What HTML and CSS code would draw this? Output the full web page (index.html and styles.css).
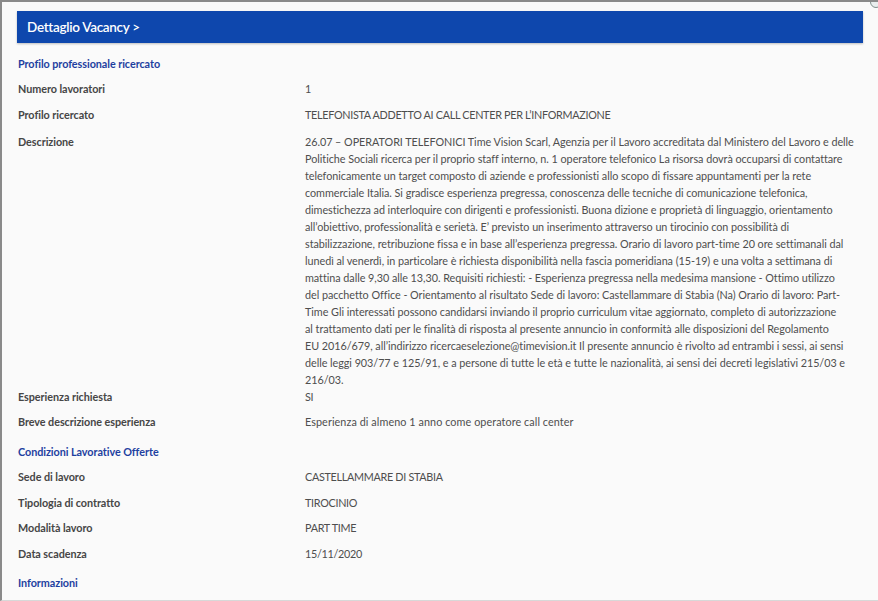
FILE: index.html
```html
<!DOCTYPE html>
<html lang="it">
<head>
<meta charset="utf-8">
<title>Dettaglio Vacancy</title>
<link rel="stylesheet" href="styles.css">
</head>
<body>
<div class="modal">
  <span class="corner"></span>
  <div class="header">Dettaglio Vacancy &gt;</div>
  <div class="content">
    <div class="section section-first">Profilo professionale ricercato</div>
    <div class="row"><div class="label">Numero lavoratori</div><div class="value">1</div></div>
    <div class="row"><div class="label">Profilo ricercato</div><div class="value">TELEFONISTA ADDETTO AI CALL CENTER PER L’INFORMAZIONE</div></div>
    <div class="row row-long"><div class="label">Descrizione</div><div class="value text desc">26.07 – OPERATORI TELEFONICI Time Vision Scarl, Agenzia per il Lavoro accreditata dal Ministero del Lavoro e delle<br>Politiche Sociali ricerca per il proprio staff interno, n. 1 operatore telefonico La risorsa dovrà occuparsi di contattare<br>telefonicamente un target composto di aziende e professionisti allo scopo di fissare appuntamenti per la rete<br>commerciale Italia. Si gradisce esperienza pregressa, conoscenza delle tecniche di comunicazione telefonica,<br>dimestichezza ad interloquire con dirigenti e professionisti. Buona dizione e proprietà di linguaggio, orientamento<br>all’obiettivo, professionalità e serietà. E’ previsto un inserimento attraverso un tirocinio con possibilità di<br>stabilizzazione, retribuzione fissa e in base all’esperienza pregressa. Orario di lavoro part-time 20 ore settimanali dal<br>lunedì al venerdì, in particolare è richiesta disponibilità nella fascia pomeridiana (15-19) e una volta a settimana di<br>mattina dalle 9,30 alle 13,30. Requisiti richiesti: - Esperienza pregressa nella medesima mansione - Ottimo utilizzo<br>del pacchetto Office - Orientamento al risultato Sede di lavoro: Castellammare di Stabia (Na) Orario di lavoro: Part-<br>Time Gli interessati possono candidarsi inviando il proprio curriculum vitae aggiornato, completo di autorizzazione<br>al trattamento dati per le finalità di risposta al presente annuncio in conformità alle disposizioni del Regolamento<br>EU 2016/679, all’indirizzo ricercaeselezione@timevision.it Il presente annuncio è rivolto ad entrambi i sessi, ai sensi<br>delle leggi 903/77 e 125/91, e a persone di tutte le età e tutte le nazionalità, ai sensi dei decreti legislativi 215/03 e<br>216/03.</div></div>
    <div class="row"><div class="label">Esperienza richiesta</div><div class="value">SI</div></div>
    <div class="row"><div class="label">Breve descrizione esperienza</div><div class="value text text-loose">Esperienza di almeno 1 anno come operatore call center</div></div>
    <div class="section">Condizioni Lavorative Offerte</div>
    <div class="row"><div class="label">Sede di lavoro</div><div class="value">CASTELLAMMARE DI STABIA</div></div>
    <div class="row"><div class="label">Tipologia di contratto</div><div class="value">TIROCINIO</div></div>
    <div class="row"><div class="label">Modalità lavoro</div><div class="value">PART TIME</div></div>
    <div class="row"><div class="label">Data scadenza</div><div class="value">15/11/2020</div></div>
    <div class="section">Informazioni</div>
  </div>
</div>
</body>
</html>
```
FILE: styles.css
```css
html, body {
  margin: 0;
  padding: 0;
  background: #fafafa;
  overflow: hidden;
}
body {
  font-family: "Lato", "Liberation Sans", sans-serif;
  font-size: 10.8px;
  color: #4a4a4a;
}
.modal {
  position: relative;
  height: 601px;
  box-sizing: border-box;
  border-top: 2px solid #8a8a8a;
  border-left: 2px solid #8a8a8a;
  border-bottom: 1px solid #d8d8d8;
  background: #fafafa;
  overflow: hidden;
}
.corner {
  position: absolute;
  top: -6px;
  right: -4px;
  width: 10px;
  height: 10px;
  border-radius: 50%;
  border: 1px solid #7f8f8c;
  background: #e9eeee;
}
.header {
  margin: 9px 15px 0 15px;
  height: 32px;
  background: #0e47ad;
  color: #ffffff;
  font-size: 13.5px;
  font-weight: 600;
  letter-spacing: -0.3px;
  line-height: 32px;
  padding-left: 10px;
  box-shadow: 0 1px 2px rgba(0,0,0,0.25);
}
.content {
  padding: 12px 0 0 16px;
}
.section {
  color: #1e3fa0;
  font-weight: 700;
  letter-spacing: -0.05px;
  line-height: 17px;
  margin-top: 4px;
  padding-bottom: 8.5px;
}
.section-first {
  margin-top: 0;
  padding-bottom: 8px;
}
.row {
  display: grid;
  grid-template-columns: 287px 1fr;
  line-height: 17px;
  padding-bottom: 8.5px;
}
.row-long {
  padding-top: 1.5px;
  padding-bottom: 0;
}
.label {
  font-weight: 700;
  color: #464646;
  letter-spacing: -0.05px;
}
.value {
  color: #4e4e4e;
  letter-spacing: -0.3px;
}
.text {
  letter-spacing: -0.04px;
}
.text-loose {
  letter-spacing: 0.08px;
}
.desc {
  white-space: nowrap;
}
```
